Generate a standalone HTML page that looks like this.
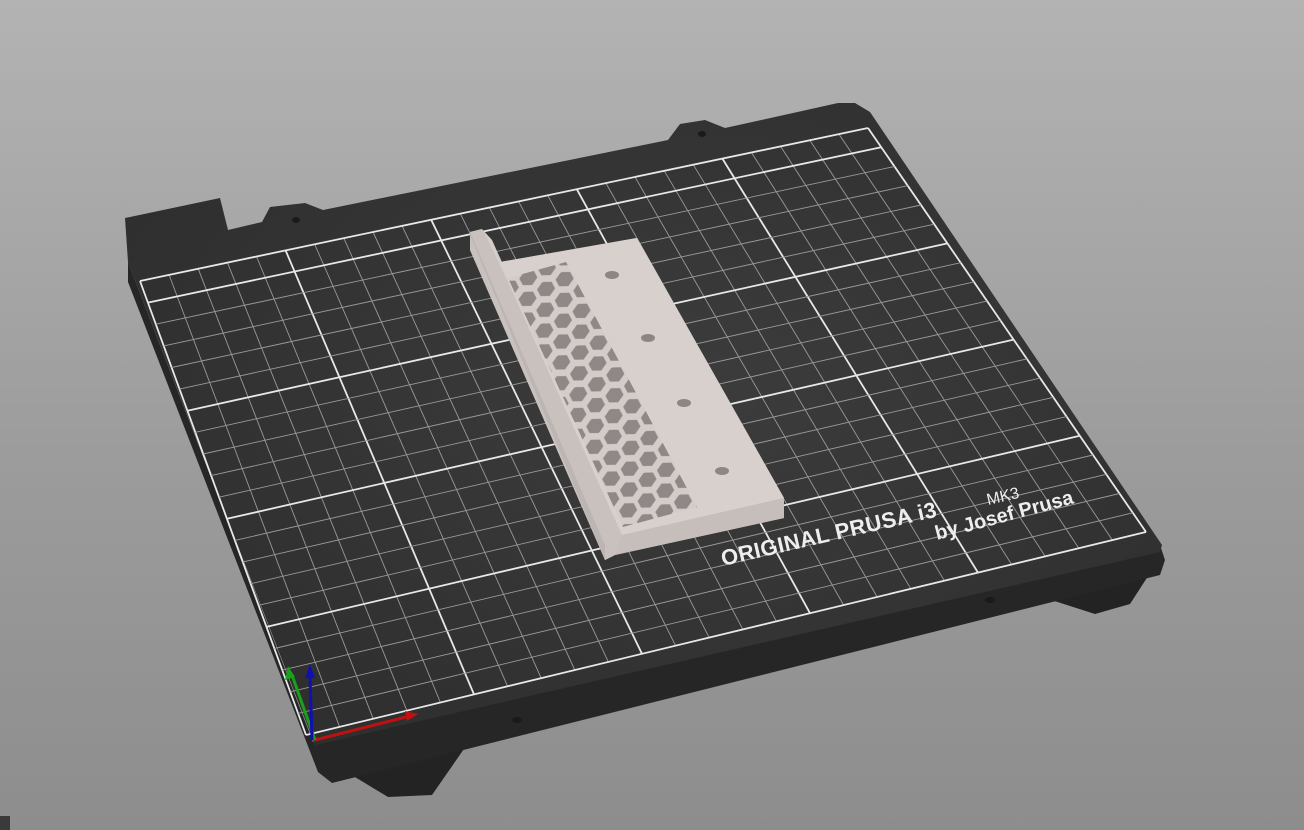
<!DOCTYPE html>
<html><head><meta charset="utf-8"><style>
html,body{margin:0;padding:0;width:1304px;height:830px;overflow:hidden;background:linear-gradient(#b3b3b3,#9c9c9c 55%,#8d8d8d);}
svg{display:block}
</style></head><body>
<svg id="s" width="1304" height="830" viewBox="0 0 1304 830" xmlns="http://www.w3.org/2000/svg">
<defs>
<radialGradient id="pg" cx="0.55" cy="0.45" r="0.6"><stop offset="0" stop-color="#3c3c3c"/><stop offset="1" stop-color="#2f2f2f"/></radialGradient>
<pattern id="hex" width="24" height="14" patternUnits="userSpaceOnUse" patternTransform="rotate(62) scale(1.5)">
<rect width="24" height="14" fill="#d4ccc9"/>
<path d="M2.5 1.5 L7.5 1.5 L10.3 7 L7.5 12.5 L2.5 12.5 L-0.3 7Z M14.5 -5.5 L19.5 -5.5 L22.3 0 L19.5 5.5 L14.5 5.5 L11.7 0Z M14.5 8.5 L19.5 8.5 L22.3 14 L19.5 19.5 L14.5 19.5 L11.7 14Z" fill="#8f8886"/>
</pattern>
<clipPath id="hc"><polygon points="508,278 566,262 697,507 623,527"/></clipPath>
</defs>
<polygon points="340,768 388,797 432,795 466,746" fill="#232323"/>
<polygon points="1045,598 1095,614 1130,604 1152,570" fill="#232323"/>
<polygon points="128,262 313,742 1160,545 1165,560 1160,575 332,783 318,772 128,282" fill="#262626"/>
<polygon points="128,262 125,218 220,198 228,230 262,222 270,207 305,203 323,210 668,140 680,124 705,120 725,128 838,103 855,103 870,112 1162,545 1160,552 315,745" fill="url(#pg)"/>
<ellipse cx="296" cy="220" rx="4" ry="3" fill="#1a1a1a"/>
<ellipse cx="702" cy="134" rx="4" ry="3" fill="#1a1a1a"/>
<ellipse cx="517" cy="720" rx="5" ry="3" fill="#1a1a1a"/>
<ellipse cx="990" cy="600" rx="5" ry="3" fill="#1a1a1a"/>
<g id="grid"></g>
<text x="723" y="566" transform="rotate(-13 723 566)" font-family="Liberation Sans,sans-serif" font-weight="bold" font-size="22" fill="#eee" letter-spacing="0.4">ORIGINAL PRUSA i3</text>
<text x="988" y="505" transform="rotate(-13 988 505)" font-family="Liberation Sans,sans-serif" font-size="16" fill="#eee">MK3</text>
<text x="937" y="540" transform="rotate(-15 937 540)" font-family="Liberation Sans,sans-serif" font-weight="bold" font-size="20" fill="#eee">by Josef Prusa</text>
<polygon points="470,232 482,229 500,262 637,238 784,498 784,518 615,555 605,560 470,250" fill="#cfc7c4"/>
<polygon points="470,232 470,250 605,560 615,555 622,535 620,507 496,258 482,229" fill="#c9c1be"/>
<polygon points="482,229 498,260 622,535 620,507 600,480 492,240" fill="#d5cdca"/>
<polygon points="500,262 637,238 784,498 622,535" fill="#d8d0cd"/>
<polygon points="622,535 784,498 784,518 615,555" fill="#c6bebb"/>
<polygon points="470,235 605,560 605,545 470,232" fill="#bdb5b2"/>
<g clip-path="url(#hc)"><rect x="480" y="250" width="240" height="300" fill="url(#hex)"/></g>
<ellipse cx="612" cy="275" rx="7" ry="4" fill="#8d8684"/>
<ellipse cx="648" cy="338" rx="7" ry="4" fill="#8d8684"/>
<ellipse cx="684" cy="403" rx="7" ry="4" fill="#8d8684"/>
<ellipse cx="722" cy="471" rx="7" ry="4" fill="#8d8684"/>
<line x1="315" y1="740" x2="410" y2="716" stroke="#c01010" stroke-width="3"/>
<polygon points="418,714 405,711 407,721" fill="#c01010"/>
<line x1="315" y1="740" x2="292" y2="675" stroke="#1aa01a" stroke-width="3"/>
<polygon points="288,666 285,680 295,677" fill="#1aa01a"/>
<line x1="312" y1="740" x2="310" y2="675" stroke="#1010b0" stroke-width="3"/>
<polygon points="310,664 305,678 315,678" fill="#1010b0"/>
<rect x="0" y="816" width="10" height="14" fill="#3a3a3a"/>
</svg>
<script>
(function(){
var TL=[140,281],TR=[868,128],BR=[1146,532],BL=[306,735];
function P(u,v){var x=(1-u)*(1-v)*TL[0]+u*(1-v)*TR[0]+u*v*BR[0]+(1-u)*v*BL[0];
var y=(1-u)*(1-v)*TL[1]+u*(1-v)*TR[1]+u*v*BR[1]+(1-u)*v*BL[1];return [x,y];}
var g=document.getElementById('grid'),h='';
function L(a,b,w,c){h+='<line x1="'+a[0].toFixed(1)+'" y1="'+a[1].toFixed(1)+'" x2="'+b[0].toFixed(1)+'" y2="'+b[1].toFixed(1)+'" stroke="'+c+'" stroke-width="'+w+'"/>';}
for(var i=0;i<=25;i++){var u=i/25;var m=i%5==0;L(P(u,0),P(u,1),m?1.8:0.9,m?'#e8e8e8':'#9a9a9a');}
for(var j=0;j<=21;j++){var v=j/21;var k=21-j;var m=k%5==0||j==0;L(P(0,v),P(1,v),m?1.8:0.9,m?'#e8e8e8':'#9a9a9a');}
g.innerHTML=h;
})();
</script>
</body></html>
